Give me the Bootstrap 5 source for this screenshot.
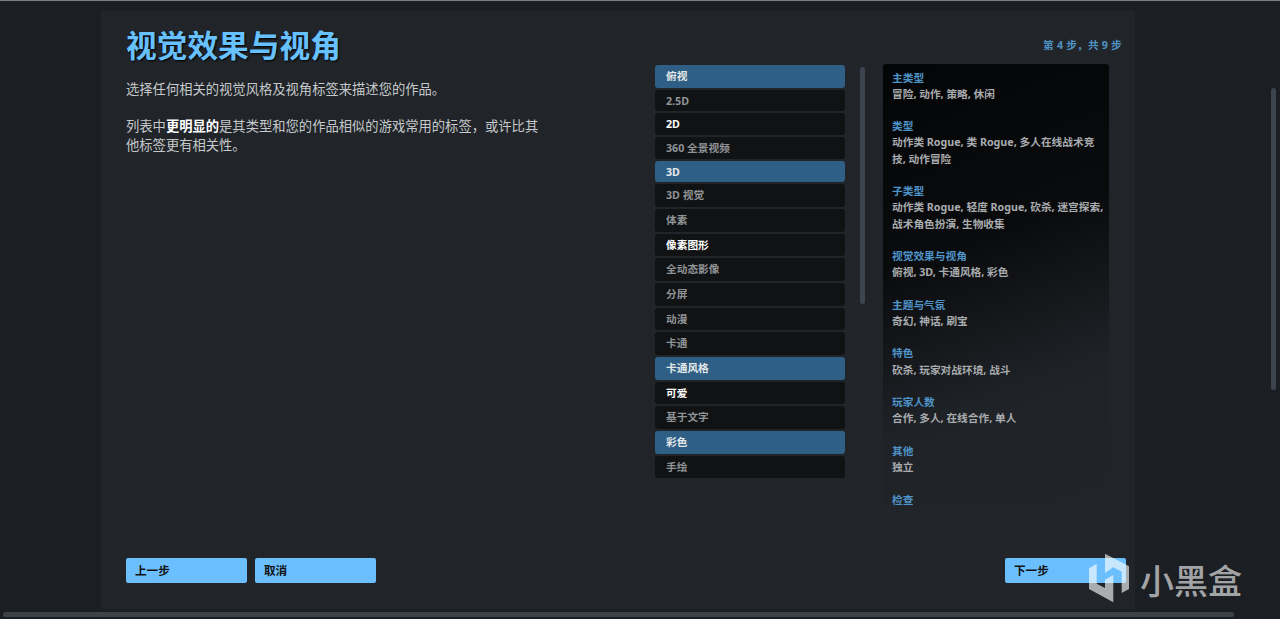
<!DOCTYPE html>
<html lang="zh-CN">
<head>
<meta charset="utf-8">
<title>视觉效果与视角</title>
<link rel="stylesheet" href="https://cdn.jsdelivr.net/npm/bootstrap@5.3.0/dist/css/bootstrap.min.css">
<style>
html,body{height:619px;overflow:hidden;background:#1b1e23;}
body{font-family:"Noto Sans","Noto Sans CJK SC",sans-serif;border-top:1px solid #7d8083;position:relative;}
.wiz-panel{width:1034px;height:598px;margin:10px 0 0 101px;background:#212529;padding:13px 9px 26px 25px;}
.wiz-title{font-family:"Noto Sans CJK SC",sans-serif;font-size:30.7px;font-weight:700;line-height:40px;color:#67c1ff;margin:0;text-shadow:1px 1px 2px #000;}
.wiz-left{width:419px;flex:none;}
.wiz-desc{font-size:13.3px;line-height:19px;color:#c6c9cb;margin:16px 0 0;}
.wiz-desc b{color:#fff;}
.wiz-desc p{margin:0 0 18px;}
.wiz-mid{width:190px;flex:none;margin-left:110px;padding-top:41.3px;}
.wiz-row{height:22.65px;margin-bottom:2px;background:#101214;border-radius:3px;padding:1px 11px 0;font-size:10.7px;font-weight:700;line-height:21.65px;color:#8f9296;}
.wiz-row.is-latin{height:21.3px;line-height:20.3px;}
.wiz-row.is-on{background:#2f5f84;color:#e4e8ea;}
.wiz-row.is-strong{color:#fff;}
.wiz-thumb{width:5px;height:237px;background:#3d4450;border-radius:3px;margin:43px 0 0 15px;flex:none;}
.wiz-right{width:226px;flex:none;margin-left:18px;}
.wiz-step{font-size:10.7px;font-weight:700;color:#4f93c4;line-height:16px;white-space:nowrap;text-align:right;margin:13px -13px 11px 0;letter-spacing:.2px;}
.wiz-card{height:442px;border-radius:3px;padding:5.5px 4px 0 9px;background:linear-gradient(160deg,#040506 0%,#0a0b0d 40%,#1f2227 72%,#212529 100%);font-size:10.7px;font-weight:700;line-height:16.25px;}
.wiz-sec{margin-bottom:16.2px;}
.wiz-sec h6{font-size:10.7px;line-height:16.25px;font-weight:700;color:#4f94c8;margin:0;}
.wiz-sec div{color:#a9acaf;}
.wiz-foot{height:25px;margin-top:1px;}
.wiz-btn{width:121px;height:25px;background:#6cbfff;color:#111;border:0;border-radius:2px;font-size:11.6px;font-weight:700;line-height:25px;padding:0 9px;text-align:left;}
.wiz-btn:hover{background:#6cbfff;color:#111;}
.wiz-hbar{position:absolute;left:3px;top:611px;width:1231px;height:5px;background:#3d4248;border-radius:3px;}
.wiz-vbar{position:absolute;left:1271px;top:87px;width:5px;height:302px;background:#3d4450;border-radius:3px;}
.wiz-mark{position:absolute;left:1085px;top:548px;display:flex;align-items:flex-start;gap:5px;color:rgba(255,255,255,.62);}
.wiz-mark span{font-family:"Noto Sans CJK SC",sans-serif;font-size:34px;font-weight:500;line-height:50px;margin-top:6px;white-space:nowrap;}
</style>
</head>
<body>
<main class="wiz-panel d-flex flex-column">
  <div class="d-flex flex-grow-1">
    <div class="wiz-left">
      <h1 class="wiz-title">视觉效果与视角</h1>
      <div class="wiz-desc">
        <p>选择任何相关的视觉风格及视角标签来描述您的作品。</p>
        <p>列表中<b>更明显的</b>是其类型和您的作品相似的游戏常用的标签，或许比其他标签更有相关性。</p>
      </div>
    </div>
    <div class="wiz-mid">
      <div class="wiz-row is-on">俯视</div>
      <div class="wiz-row is-latin">2.5D</div>
      <div class="wiz-row is-latin is-strong">2D</div>
      <div class="wiz-row">360 全景视频</div>
      <div class="wiz-row is-latin is-on">3D</div>
      <div class="wiz-row">3D 视觉</div>
      <div class="wiz-row">体素</div>
      <div class="wiz-row is-strong">像素图形</div>
      <div class="wiz-row">全动态影像</div>
      <div class="wiz-row">分屏</div>
      <div class="wiz-row">动漫</div>
      <div class="wiz-row">卡通</div>
      <div class="wiz-row is-on">卡通风格</div>
      <div class="wiz-row is-strong">可爱</div>
      <div class="wiz-row">基于文字</div>
      <div class="wiz-row is-on">彩色</div>
      <div class="wiz-row">手绘</div>
    </div>
    <div class="wiz-thumb"></div>
    <div class="wiz-right">
      <div class="wiz-step">第 4 步，共 9 步</div>
      <div class="wiz-card">
        <div class="wiz-sec"><h6>主类型</h6><div>冒险, 动作, 策略, 休闲</div></div>
        <div class="wiz-sec"><h6>类型</h6><div>动作类 Rogue, 类 Rogue, 多人在线战术竞技, 动作冒险</div></div>
        <div class="wiz-sec"><h6>子类型</h6><div>动作类 Rogue, 轻度 Rogue, 砍杀, 迷宫探索, 战术角色扮演, 生物收集</div></div>
        <div class="wiz-sec"><h6>视觉效果与视角</h6><div>俯视, 3D, 卡通风格, 彩色</div></div>
        <div class="wiz-sec"><h6>主题与气氛</h6><div>奇幻, 神话, 刷宝</div></div>
        <div class="wiz-sec"><h6>特色</h6><div>砍杀, 玩家对战环境, 战斗</div></div>
        <div class="wiz-sec"><h6>玩家人数</h6><div>合作, 多人, 在线合作, 单人</div></div>
        <div class="wiz-sec"><h6>其他</h6><div>独立</div></div>
        <div class="wiz-sec"><h6>检查</h6></div>
      </div>
    </div>
  </div>
  <div class="wiz-foot d-flex gap-2">
    <button class="btn wiz-btn" type="button">上一步</button>
    <button class="btn wiz-btn" type="button">取消</button>
    <button class="btn wiz-btn ms-auto" type="button">下一步</button>
  </div>
</main>
<div class="wiz-hbar"></div>
<div class="wiz-vbar"></div>
<div class="wiz-mark">
  <svg width="50" height="58" viewBox="0 0 50 58" fill="#fff" fill-opacity=".62"><path d="M20 4.7 44 17.3V40L36.7 44V22.7L28.3 18.3 20 24Z"/><path d="M4 19.3 11.7 14.7V34.7L20 39V30.7L28.3 26V53.3L4 40Z"/></svg>
  <span>小黑盒</span>
</div>
</body>
</html>
